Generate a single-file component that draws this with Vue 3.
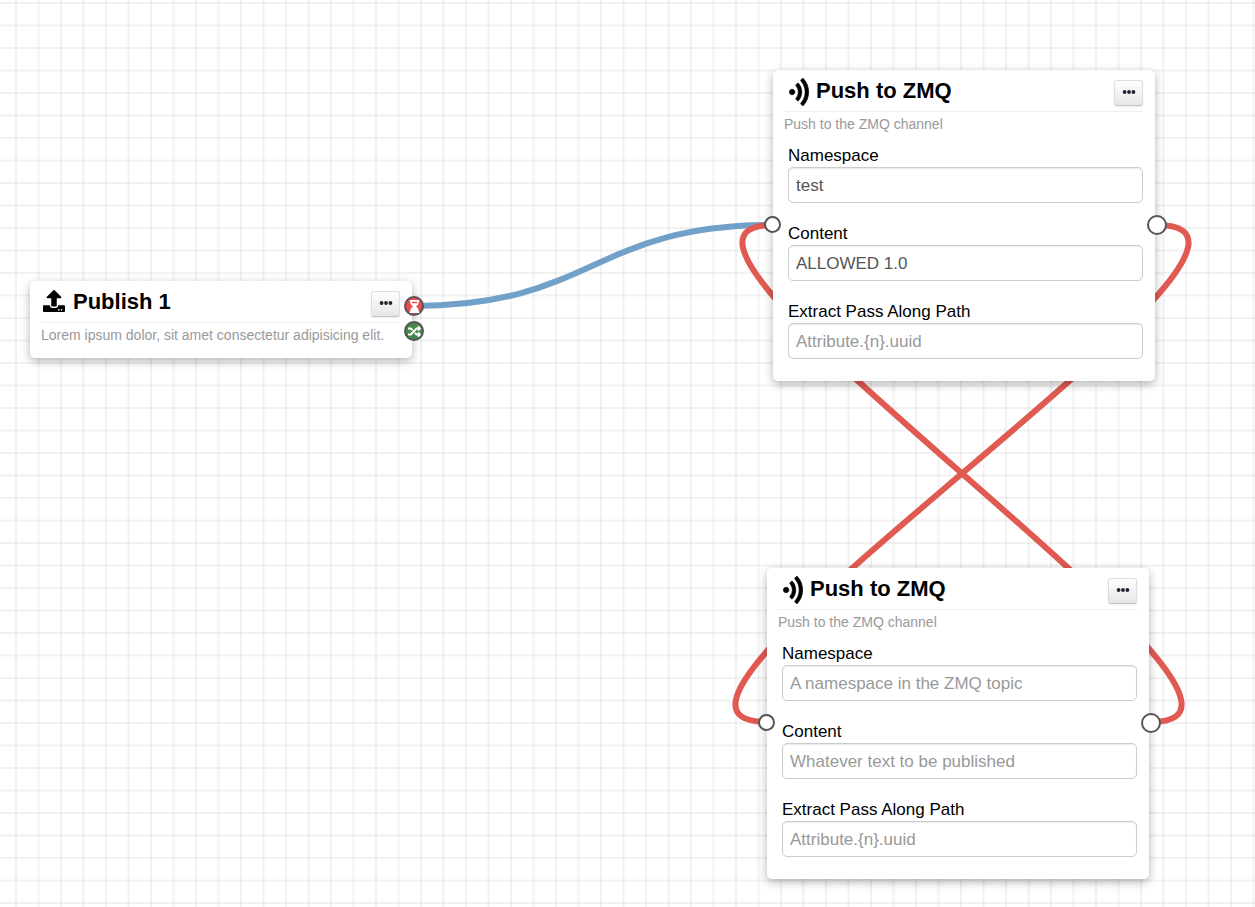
<script setup>
import { reactive } from 'vue'

const nodes = reactive([
  {
    id: 'publish',
    icon: 'upload',
    title: 'Publish 1',
    description: 'Lorem ipsum dolor, sit amet consectetur adipisicing elit.',
    fields: [],
    hasInput: false,
    outputs: ['blocking', 'parallel'],
  },
  {
    id: 'zmq-a',
    icon: 'wave',
    title: 'Push to ZMQ',
    description: 'Push to the ZMQ channel',
    fields: [
      { label: 'Namespace', value: 'test', placeholder: 'A namespace in the ZMQ topic' },
      { label: 'Content', value: 'ALLOWED 1.0', placeholder: 'Whatever text to be published' },
      { label: 'Extract Pass Along Path', value: '', placeholder: 'Attribute.{n}.uuid' },
    ],
    hasInput: true,
    outputs: ['plain'],
  },
  {
    id: 'zmq-b',
    icon: 'wave',
    title: 'Push to ZMQ',
    description: 'Push to the ZMQ channel',
    fields: [
      { label: 'Namespace', value: '', placeholder: 'A namespace in the ZMQ topic' },
      { label: 'Content', value: '', placeholder: 'Whatever text to be published' },
      { label: 'Extract Pass Along Path', value: '', placeholder: 'Attribute.{n}.uuid' },
    ],
    hasInput: true,
    outputs: ['plain'],
  },
])

const links = [
  { kind: 'ok', from: [414, 306], to: [772, 225] },
  { kind: 'loop', from: [1157, 225], to: [767, 722] },
  { kind: 'loop', from: [1151, 722], to: [773, 225] },
]

function curve({ from, to }) {
  const bend = Math.abs(to[0] - from[0]) / 2
  return `M${from[0]} ${from[1]} C${from[0] + bend} ${from[1]} ${to[0] - bend} ${to[1]} ${to[0]} ${to[1]}`
}
</script>

<template>
  <main class="canvas">
    <svg class="links" aria-hidden="true">
      <path v-for="(link, i) in links" :key="i" :class="link.kind" :d="curve(link)" />
    </svg>

    <article v-for="node in nodes" :key="node.id" class="node" :class="node.id">
      <header class="head">
        <svg v-if="node.icon === 'upload'" class="icon-upload" viewBox="0 0 512 512" aria-hidden="true">
          <path d="M296 384h-80c-13.3 0-24-10.7-24-24V192h-87.7c-17.8 0-26.7-21.5-14.1-34.1L242.3 5.7c7.5-7.5 19.8-7.5 27.3 0l152.2 152.2c12.6 12.6 3.7 34.1-14.1 34.1H320v168c0 13.3-10.7 24-24 24zm216-8v112c0 13.3-10.7 24-24 24H24c-13.3 0-24-10.7-24-24V376c0-13.3 10.7-24 24-24h136v8c0 30.9 25.1 56 56 56h80c30.9 0 56-25.1 56-56v-8h136c13.3 0 24 10.7 24 24zm-124 88c0-11-9-20-20-20s-20 9-20 20 9 20 20 20 20-9 20-20zm64 0c0-11-9-20-20-20s-20 9-20 20 9 20 20 20 20-9 20-20z" />
        </svg>
        <svg v-else class="icon-wave" viewBox="0 0 512 640" aria-hidden="true">
          <g transform="translate(512 0) rotate(90)">
            <path d="M634.91 154.88C457.74-8.99 182.19-8.93 5.09 154.88c-6.66 6.16-6.79 16.59-.35 22.98l34.24 33.97c6.14 6.1 16.02 6.23 22.4.38 145.92-133.68 371.3-133.71 517.25 0 6.38 5.85 16.26 5.71 22.4-.38l34.24-33.97c6.43-6.39 6.3-16.82-.36-22.98zM320 352c-35.35 0-64 28.65-64 64s28.65 64 64 64 64-28.65 64-64-28.65-64-64-64zm202.67-83.59c-115.26-101.93-290.21-101.82-405.34 0-6.9 6.1-7.12 16.69-.57 23.15l34.44 33.99c6 5.92 15.66 6.32 22.05.8 83.95-72.57 209.74-72.41 293.49 0 6.39 5.52 16.05 5.13 22.05-.8l34.44-33.99c6.56-6.46 6.33-17.06-.56-23.15z" />
          </g>
        </svg>
        <h2 class="title">{{ node.title }}</h2>
        <button type="button" class="more" aria-label="More options">
          <svg viewBox="0 0 14 6" aria-hidden="true">
            <circle cx="2.6" cy="3" r="1.9" />
            <circle cx="7" cy="3" r="1.9" />
            <circle cx="11.4" cy="3" r="1.9" />
          </svg>
        </button>
      </header>
      <p class="description">{{ node.description }}</p>
      <form v-if="node.fields.length" class="fields" @submit.prevent>
        <div v-for="(field, i) in node.fields" :key="i" class="field">
          <label :for="`${node.id}-${i}`">{{ field.label }}</label>
          <input :id="`${node.id}-${i}`" v-model="field.value" type="text" :placeholder="field.placeholder" />
        </div>
      </form>

      <div v-if="node.hasInput" class="ports inputs">
        <span class="port small"></span>
      </div>
      <div class="ports outputs">
        <span v-for="output in node.outputs" :key="output" class="port" :class="output">
          <svg v-if="output === 'blocking'" viewBox="0 0 384 512" aria-hidden="true">
            <path d="M360 0H24C10.745 0 0 10.745 0 24v16c0 13.255 10.745 24 24 24 0 90.965 51.016 167.734 120.842 192C75.016 280.266 24 357.035 24 448c-13.255 0-24 10.745-24 24v16c0 13.255 10.745 24 24 24h336c13.255 0 24-10.745 24-24v-16c0-13.255-10.745-24-24-24 0-90.965-51.016-167.734-120.842-192C308.984 231.734 360 154.965 360 64c13.255 0 24-10.745 24-24V24c0-13.255-10.745-24-24-24zM284.96 128H99.078C91.988 108.548 88 86.748 88 64h208c0 22.805-3.987 44.587-11.059 64z" />
          </svg>
          <svg v-if="output === 'parallel'" viewBox="0 0 512 512" aria-hidden="true">
            <path d="M504.971 359.029c9.373 9.373 9.373 24.569 0 33.941l-80 79.984c-15.01 15.01-40.971 4.49-40.971-16.971V416h-58.785a12.004 12.004 0 0 1-8.773-3.812l-70.556-75.596 53.333-57.143L352 336h32v-39.981c0-21.438 25.943-31.998 40.971-16.971l80 79.981zM12 176h84l52.781 56.551 53.333-57.143-70.556-75.596A11.999 11.999 0 0 0 122.785 96H12c-6.627 0-12 5.373-12 12v56c0 6.627 5.373 12 12 12zm372 0v39.984c0 21.46 25.961 31.98 40.971 16.971l80-79.984c9.373-9.373 9.373-24.569 0-33.941l-80-79.981C409.943 24.021 384 34.582 384 56.019V96h-58.785a12.004 12.004 0 0 0-8.773 3.812L96 336H12c-6.627 0-12 5.373-12 12v56c0 6.627 5.373 12 12 12h110.785c3.326 0 6.503-1.381 8.773-3.812L352 176h32z" />
          </svg>
        </span>
      </div>
    </article>
  </main>
</template>

<style>
body {
  margin: 0;
}
</style>

<style scoped>
.canvas {
  --line: rgba(0, 0, 0, 0.05);
  --soft: rgba(0, 0, 0, 0.025);
  position: relative;
  min-height: 100vh;
  overflow: hidden;
  color: #000;
  font-family: "Liberation Sans", Arial, sans-serif;
  background-color: #fff;
  background-image:
    linear-gradient(90deg, var(--line) 2px, transparent 2px 22px, var(--soft) 22px 23px, var(--line) 23px 24px, var(--soft) 24px 25px, transparent 25px),
    linear-gradient(var(--line) 2px, transparent 2px 22px, var(--soft) 22px 23px, var(--line) 23px 24px, var(--soft) 24px 25px, transparent 25px);
  background-size: 45px 45px;
  background-position: 15px 2px;
}

.links {
  position: absolute;
  inset: 0;
  width: 100%;
  height: 100%;
  fill: none;
  stroke-width: 6px;
}

.ok {
  stroke: #71a1c9;
}

.loop {
  stroke: #e05a52;
}

.node {
  position: absolute;
  box-sizing: border-box;
  width: 382px;
  padding: 10px 12px 11px 11px;
  border-radius: 5px;
  background: #fff;
  box-shadow: 0 3px 10px rgba(0, 0, 0, 0.3);
}

.publish {
  left: 30px;
  top: 281px;
}

.zmq-a {
  left: 773px;
  top: 70px;
}

.zmq-b {
  left: 767px;
  top: 568px;
}

.head {
  display: flex;
  align-items: flex-start;
  height: 31px;
  border-bottom: 1px solid #f0f0f0;
}

.icon-upload {
  width: 22px;
  height: 22px;
  margin: -1px 8px 0 2px;
}

.icon-wave {
  width: 22px;
  height: 28px;
  margin: -2px 6px 0 4px;
  stroke: #000;
  stroke-width: 16px;
}

.title {
  flex: 1;
  margin: 0;
  font-size: 22px;
  line-height: 22px;
}

.more {
  display: flex;
  align-items: center;
  justify-content: center;
  box-sizing: border-box;
  width: 29px;
  height: 26px;
  padding: 0 0 3px;
  border: 1px solid #ddd;
  border-bottom-color: #c4c4c4;
  border-radius: 3px;
  background: linear-gradient(#fff, #e6e6e6);
  box-shadow: 0 1px 2px rgba(0, 0, 0, 0.08);
}

.more svg {
  width: 14px;
  height: 6px;
  fill: #223;
}

.description {
  margin: 0;
  color: #999;
  font-size: 14px;
  line-height: 24px;
  white-space: nowrap;
}

.fields {
  display: grid;
  gap: 20px;
  padding: 9px 0 11px 4px;
}

.field {
  display: grid;
}

label {
  font-size: 17px;
  line-height: 22px;
}

input {
  box-sizing: border-box;
  width: 100%;
  height: 36px;
  padding: 2px 7px 0;
  border: 1px solid #ccc;
  border-radius: 5px;
  color: #555;
  background: #fff;
  font-family: inherit;
  font-size: 17px;
  box-shadow: inset 0 1px 1px rgba(0, 0, 0, 0.08);
}

input::placeholder {
  color: #999;
  opacity: 1;
}

.ports {
  position: absolute;
  top: 0;
  bottom: 2px;
  display: flex;
  flex-direction: column;
  justify-content: center;
  gap: 5px;
  pointer-events: none;
}

.inputs {
  left: -9px;
}

.outputs {
  right: -12px;
}

.port {
  display: flex;
  align-items: center;
  justify-content: center;
  box-sizing: border-box;
  width: 20px;
  height: 20px;
  border: 2px solid #555;
  border-radius: 50%;
  background: #fff;
  pointer-events: auto;
}

.port.small {
  width: 17px;
  height: 17px;
}

.port svg {
  width: 13px;
  height: 13px;
  fill: #fff;
}

.blocking {
  background: #e84c4c;
}

.parallel {
  background: #468847;
}
</style>
